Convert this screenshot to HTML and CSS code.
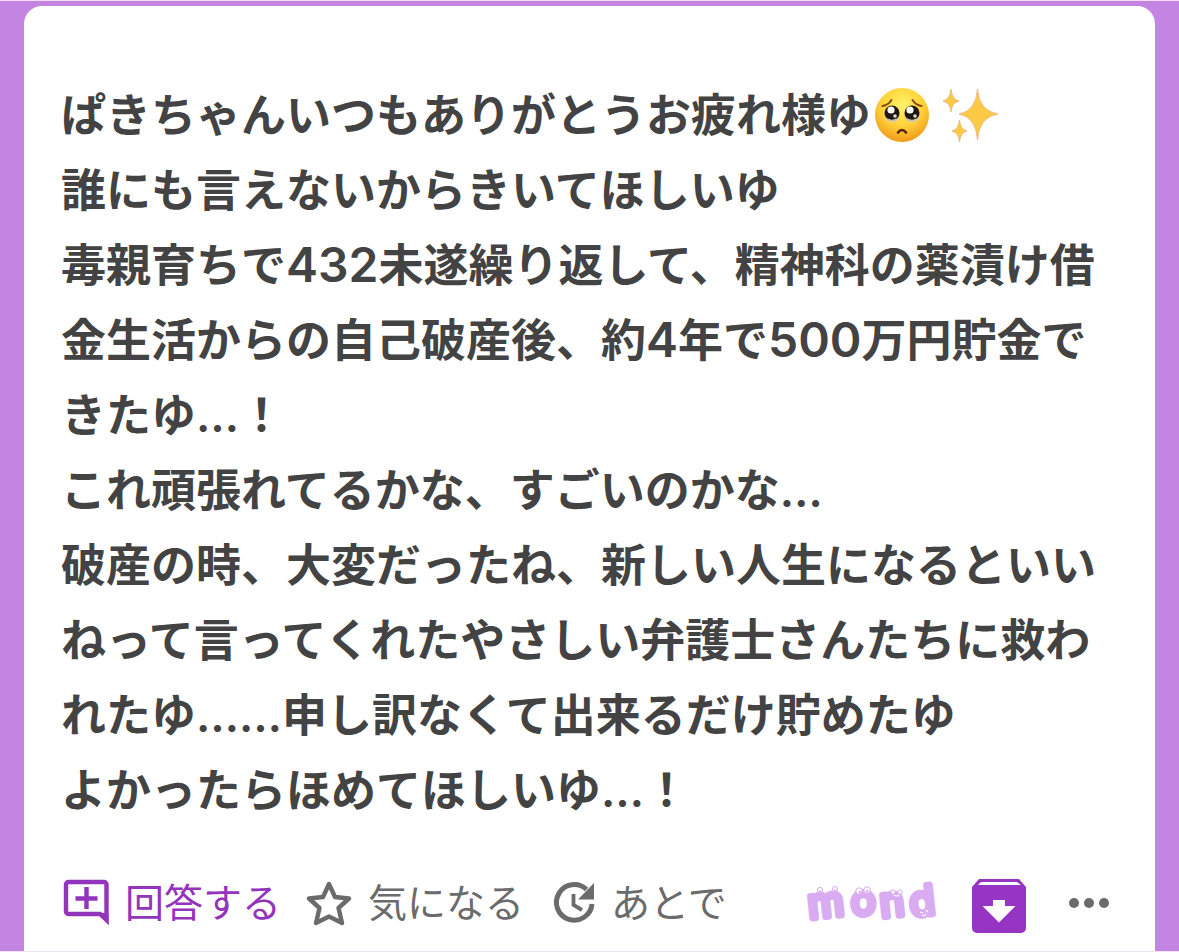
FILE: index.html
```html
<!DOCTYPE html>
<html lang="ja">
<head>
<meta charset="utf-8">
<meta name="viewport" content="width=device-width, initial-scale=1">
<title>mond</title>
<link rel="stylesheet" href="styles.css">
</head>
<body>
<main class="page">
  <article class="card">
    <div class="question">
      <p class="line">ぱきちゃんいつもありがとうお疲れ様ゆ<svg class="emoji" viewBox="0 0 56 56" role="img" aria-label="うるうるした顔">
        <defs>
          <radialGradient id="face" cx="50%" cy="32%" r="68%"><stop offset="0" stop-color="#fff36b"/><stop offset=".55" stop-color="#ffd338"/><stop offset="1" stop-color="#f09a1c"/></radialGradient>
        </defs>
        <circle cx="28" cy="28" r="27" fill="url(#face)"/>
        <ellipse cx="18" cy="29" rx="8" ry="7" fill="#f5cf70"/><ellipse cx="38" cy="29" rx="8" ry="7" fill="#f5cf70"/>
        <circle cx="18" cy="26" r="7.5" fill="#201612"/><circle cx="38" cy="26" r="7.5" fill="#201612"/>
        <circle cx="17" cy="23" r="3.6" fill="#fff"/><circle cx="36" cy="23" r="3.6" fill="#fff"/>
        <circle cx="21" cy="29" r="1.8" fill="#ddd"/><circle cx="41" cy="29" r="1.8" fill="#ddd"/>
        <path d="M13 32q5 3 10 0M33 32q5 3 10 0" fill="none" stroke="#bfc2b5" stroke-width="1.5"/>
        <path d="M8.500 19q6-1 9-6M47.500 19q-6-1-9-6" fill="none" stroke="#8b4a12" stroke-width="2" stroke-linecap="round"/>
        <path d="M24 45.500q4-5 8 0" fill="none" stroke="#5a2413" stroke-width="2.600" stroke-linecap="round"/>
      </svg><svg class="emoji sparkles" viewBox="0 0 56 56" role="img" aria-label="きらきら">
        <g fill="#fbc944" stroke="#eeb070" stroke-width=".8">
          <path d="M35.500 2Q37 24 56 27Q37 30 35.500 53Q34 30 17 27Q34 24 35.500 2Z"/>
          <path d="M9 2Q10 12.500 17 14Q10 15.500 9 25Q8 15.500 1 14Q8 12.500 9 2Z"/>
          <path d="M17.500 33Q18.500 42.500 25 44Q18.500 45.500 17.500 55Q16.500 45.500 10 44Q16.500 42.500 17.500 33Z"/>
        </g>
      </svg></p>
      <p class="line">誰にも言えないからきいてほしいゆ</p>
      <p class="line">毒親育ちで<span class="num">432</span>未遂繰り返して、精神科の薬漬け借金生活からの自己破産後、約<span class="num">4</span>年で<span class="num">500</span>万円貯金できたゆ…！</p>
      <p class="line">これ頑張れてるかな、すごいのかな…</p>
      <p class="line">破産の時、大変だったね、新しい人生になるといいねって言ってくれたやさしい弁護士さんたちに救われたゆ……申し訳なくて出来るだけ貯めたゆ</p>
      <p class="line">よかったらほめてほしいゆ…！</p>
    </div>
    <footer class="actions">
      <button class="action primary" type="button">
        <svg class="icon" viewBox="0 0 48 48" aria-hidden="true"><path d="M5.500 3H41a2.500 2.500 0 0 1 2.500 2.500V41L37 35H5.500A2.500 2.500 0 0 1 3 32.500v-27A2.500 2.500 0 0 1 5.500 3Z" fill="none" stroke="currentColor" stroke-width="4.400"/><path d="M35 34h10.500v12Z" fill="currentColor"/><path d="M23.500 8v22M12.500 19.500h22" stroke="currentColor" stroke-width="4.400"/></svg>
        <span>回答する</span>
      </button>
      <button class="action" type="button">
        <svg class="icon" viewBox="0 0 48 48" aria-hidden="true"><path d="M23 5l6 13 14 1.500-10.500 9.500 3.500 15L23 37.500 10 44 13.500 29 3 19.500 17 18Z" fill="none" stroke="currentColor" stroke-width="4.400" stroke-linejoin="round"/></svg>
        <span>気になる</span>
      </button>
      <button class="action" type="button">
        <svg class="icon" viewBox="-1 0 48 48" aria-hidden="true"><path d="M36.500 10.500A17.800 17.800 0 1 0 42 25" fill="none" stroke="currentColor" stroke-width="5"/><path d="M44 4v16.500H28Z" fill="currentColor"/><path d="M23.500 15v11l8.500 5" fill="none" stroke="currentColor" stroke-width="3.800"/></svg>
        <span>あとで</span>
      </button>
      <svg class="logo" viewBox="0 0 136 56" role="img" aria-label="mond">
        <g class="logo-text">
          <text x="2" y="42" transform="rotate(-6 20 30)">m</text>
          <text x="45" y="40">o</text>
          <text x="74" y="41" transform="rotate(-6 88 30)">n</text>
          <text x="104" y="40" transform="rotate(-6 118 30)">d</text>
        </g>
        <g fill="#fff" stroke="#d9acf1" stroke-width="1">
          <circle cx="14" cy="15" r="2.600"/><circle cx="29" cy="14" r="2.600"/><circle cx="53" cy="16" r="3.200"/><circle cx="61" cy="15" r="3.200"/><circle cx="87" cy="17" r="2.200"/><circle cx="94" cy="17" r="2.200"/>
        </g>
        <g fill="#d9acf1"><circle cx="14" cy="16" r="1"/><circle cx="29" cy="15" r="1"/><circle cx="54" cy="17" r="1.200"/><circle cx="61" cy="16" r="1.200"/></g>
        <path d="M88 20q3 2 5 0M114 37l3 1M120 35l2 2M116 40q2 2 4-1" fill="none" stroke="#fff" stroke-width="1.200"/>
      </svg>
      <button class="tool save" type="button" aria-label="保存">
        <svg viewBox="0 0 54 54" aria-hidden="true"><path d="M7 0H47L54 8V49a5 5 0 0 1-5 5H5a5 5 0 0 1-5-5V8Z" fill="#9634c4"/><path d="M9 3H45L49 6H6Z" fill="#fff"/><path d="M21 21H33v6H43.500L27 43.500 10.500 27H21Z" fill="#fff"/></svg>
      </button>
      <button class="tool more" type="button" aria-label="その他">
        <svg viewBox="0 0 42 12" aria-hidden="true"><g fill="currentColor"><circle cx="6" cy="6" r="5"/><circle cx="21" cy="6" r="5"/><circle cx="36" cy="6" r="5"/></g></svg>
      </button>
    </footer>
  </article>
</main>
</body>
</html>
```
FILE: styles.css
```css
* { box-sizing: border-box; }
body {
  margin: 0;
  background: #fff;
  color: #434343;
  font-family: Inter, "Noto Sans CJK JP", sans-serif;
}
.page {
  padding: 5px 24px 0;
  background: #c384e2;
  border-top: 1px solid #f2dcf8;
  border-bottom: 1px solid #f2e4f8;
}
.card {
  padding: 72px 37px 18px;
  background: #fff;
  border-radius: 18px 18px 0 0;
}
.line {
  margin: 0;
  font-size: 45px;
  font-weight: 600;
  line-height: 75px;
}
.num {
  font-size: 48px;
  line-height: 1;
}
.emoji {
  width: 56px;
  height: 56px;
  margin-left: 3px;
  vertical-align: -11px;
}
.sparkles { margin-left: 12px; }
.actions {
  display: flex;
  align-items: center;
  margin-top: 45px;
  padding-left: 2px;
}
.action, .tool {
  padding: 0;
  border: 0;
  background: none;
  color: #6b6b6b;
  font-family: inherit;
  flex: none;
}
.action {
  display: flex;
  align-items: center;
  gap: 14px;
  margin-right: 25px;
  font-size: 39px;
  line-height: 56px;
}
.action .icon { width: 48px; height: 48px; }
.primary { color: #9334bd; }
.logo {
  width: 136px;
  height: 56px;
  margin-left: auto;
  flex: none;
  overflow: visible;
}
.logo-text {
  font-family: Inter, sans-serif;
  font-size: 41px;
  font-weight: 400;
  fill: #d9acf1;
  stroke: #d9acf1;
  stroke-width: 6px;
  stroke-linejoin: round;
}
.tool svg { display: block; width: 100%; }
.save { width: 54px; margin: 6px 0 0 30px; }
.more { width: 42px; margin: 0 8px 0 42px; }
```
